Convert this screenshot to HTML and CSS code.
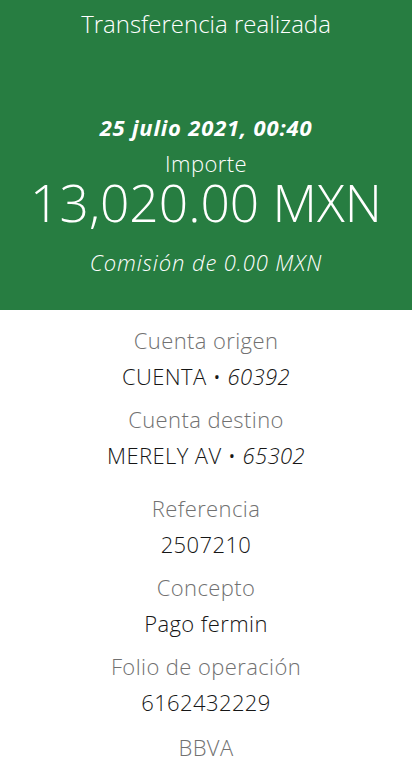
FILE: index.html
```html
<!DOCTYPE html>
<html lang="es">
<head>
<meta charset="utf-8">
<title>Transferencia realizada</title>
<link rel="stylesheet" href="styles.css">
</head>
<body>
<header class="hero">
  <h1 class="title">Transferencia realizada</h1>
  <p class="date">25 julio 2021, 00:40</p>
  <p class="amount-label">Importe</p>
  <p class="amount">13,020.00 MXN</p>
  <p class="fee">Comisión de 0.00 MXN</p>
</header>
<main class="details">
  <div class="item">
    <p class="label">Cuenta origen</p>
    <p class="value">CUENTA • <i>60392</i></p>
  </div>
  <div class="item">
    <p class="label">Cuenta destino</p>
    <p class="value">MERELY AV • <i>65302</i></p>
  </div>
  <div class="item item-gap">
    <p class="label">Referencia</p>
    <p class="value">2507210</p>
  </div>
  <div class="item">
    <p class="label">Concepto</p>
    <p class="value">Pago fermin</p>
  </div>
  <div class="item">
    <p class="label">Folio de operación</p>
    <p class="value">6162432229</p>
  </div>
  <div class="item item-last">
    <p class="label">BBVA</p>
  </div>
</main>
</body>
</html>
```

FILE: styles.css
```css
* { box-sizing: border-box; }
html, body { margin: 0; padding: 0; background: #ffffff; }
body {
  font-family: "Open Sans", "Liberation Sans", sans-serif;
  width: 412px;
  overflow: hidden;
}
p, h1 { margin: 0; }
.hero {
  background: #277d41;
  color: #ffffff;
  height: 310px;
  display: flex;
  flex-direction: column;
  align-items: center;
  text-align: center;
  padding-top: 9px;
}
.title {
  font-weight: 300;
  font-size: 24px;
  line-height: 30px;
}
.date {
  margin-top: 74px;
  font-size: 22px;
  font-weight: 700;
  font-style: italic;
  letter-spacing: 0.8px;
  line-height: 28px;
}
.amount-label {
  margin-top: 9px;
  font-size: 22px;
  font-weight: 300;
  letter-spacing: 0.4px;
  line-height: 26px;
}
.amount {
  font-size: 51.5px;
  font-weight: 300;
  line-height: 52px;
}
.fee {
  margin-top: 20px;
  font-size: 22px;
  font-weight: 300;
  font-style: italic;
  letter-spacing: 0.9px;
  line-height: 28px;
}
.details {
  display: flex;
  flex-direction: column;
  align-items: center;
  text-align: center;
  padding-top: 16px;
}
.item {
  display: flex;
  flex-direction: column;
  align-items: center;
  gap: 8px;
  margin-bottom: 15px;
}
.item-gap { margin-top: 10px; }
.item-last { margin-top: 2px; }
.label {
  color: #717171;
  font-size: 22px;
  font-weight: 300;
  letter-spacing: 0.4px;
  line-height: 28px;
}
.value {
  color: #161616;
  font-size: 22px;
  font-weight: 300;
  letter-spacing: 0.4px;
  line-height: 28px;
}
.value i { font-style: italic; }
```
